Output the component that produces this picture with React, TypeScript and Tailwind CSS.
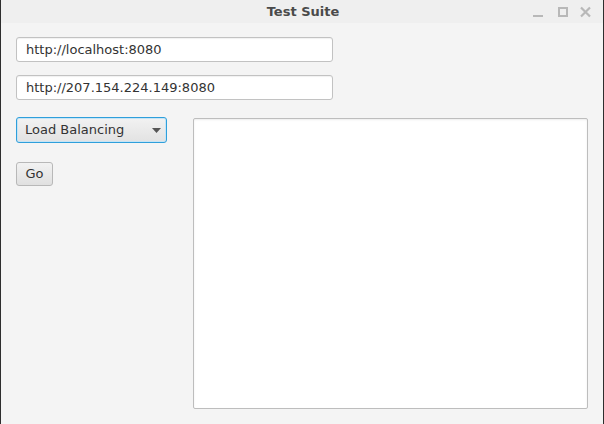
import React from 'react';

const font = { fontFamily: '"DejaVu Sans", sans-serif' };

const Field = ({ value }: { value: string }) => (
  <div className="h-[25px] w-[317px] rounded-[3px] border border-[#c2c2c2] bg-white pl-[9px] flex items-center text-[13px] text-[#333333] shadow-[inset_0_1px_1px_rgba(0,0,0,0.06)]">
    {value}
  </div>
);

export default function App() {
  return (
    <div className="w-[604px] h-[424px] flex flex-col bg-[#f4f4f4] border-x border-[#2e2e2e] overflow-hidden" style={font}>
      {/* Title bar */}
      <div className="h-[23px] flex-none bg-[#efefef] relative flex items-center justify-center">
        <span className="text-[13px] font-bold text-[#4a4a4a] ml-[2px]">Test Suite</span>
        <div className="absolute right-[12px] top-0 h-full flex items-center">
          <svg width="10" height="12" viewBox="0 0 10 12" className="mr-[15px]">
            <rect x="0" y="9" width="10" height="2" fill="#b8b8b8" />
          </svg>
          <svg width="10" height="12" viewBox="0 0 10 12" className="mr-[12px]">
            <rect x="1" y="2" width="8" height="8" fill="none" stroke="#b8b8b8" strokeWidth="2" />
          </svg>
          <svg width="11" height="12" viewBox="0 0 11 12">
            <path d="M1 1.5 L10 10.5 M10 1.5 L1 10.5" stroke="#b8b8b8" strokeWidth="2.2" />
          </svg>
        </div>
      </div>

      {/* Content */}
      <div className="flex-1 flex flex-col pl-[15px] pt-[14px]">
        <div className="flex flex-col gap-[13px]">
          <Field value="http://localhost:8080" />
          <Field value="http://207.154.224.149:8080" />
        </div>

        <div className="flex mt-[17px]">
          <div className="flex flex-col w-[177px]">
            <div className="h-[26px] w-[151px] rounded-[3px] border border-[#2e9fdb] bg-gradient-to-b from-[#f2f2f2] to-[#e2e2e2] pl-[8px] pr-[5px] flex items-center justify-between text-[13px] text-[#333333] shadow-[inset_0_0_0_1px_#c6e4f5]">
              <span>Load Balancing</span>
              <svg width="9" height="5" viewBox="0 0 9 5" className="mt-[1px]">
                <path d="M0 0 L9 0 L4.5 5 Z" fill="#555555" />
              </svg>
            </div>
            <div className="mt-[19px] h-[24px] w-[37px] rounded-[3px] border border-[#b8b8b8] bg-gradient-to-b from-[#f2f2f2] to-[#e0e0e0] flex items-center justify-center text-[13px] text-[#333333]">
              Go
            </div>
          </div>
          <div className="mt-[1px] w-[395px] h-[291px] rounded-[2px] border border-[#bdbdbd] bg-white shadow-[inset_0_1px_2px_rgba(0,0,0,0.08)]" />
        </div>
      </div>
    </div>
  );
}
